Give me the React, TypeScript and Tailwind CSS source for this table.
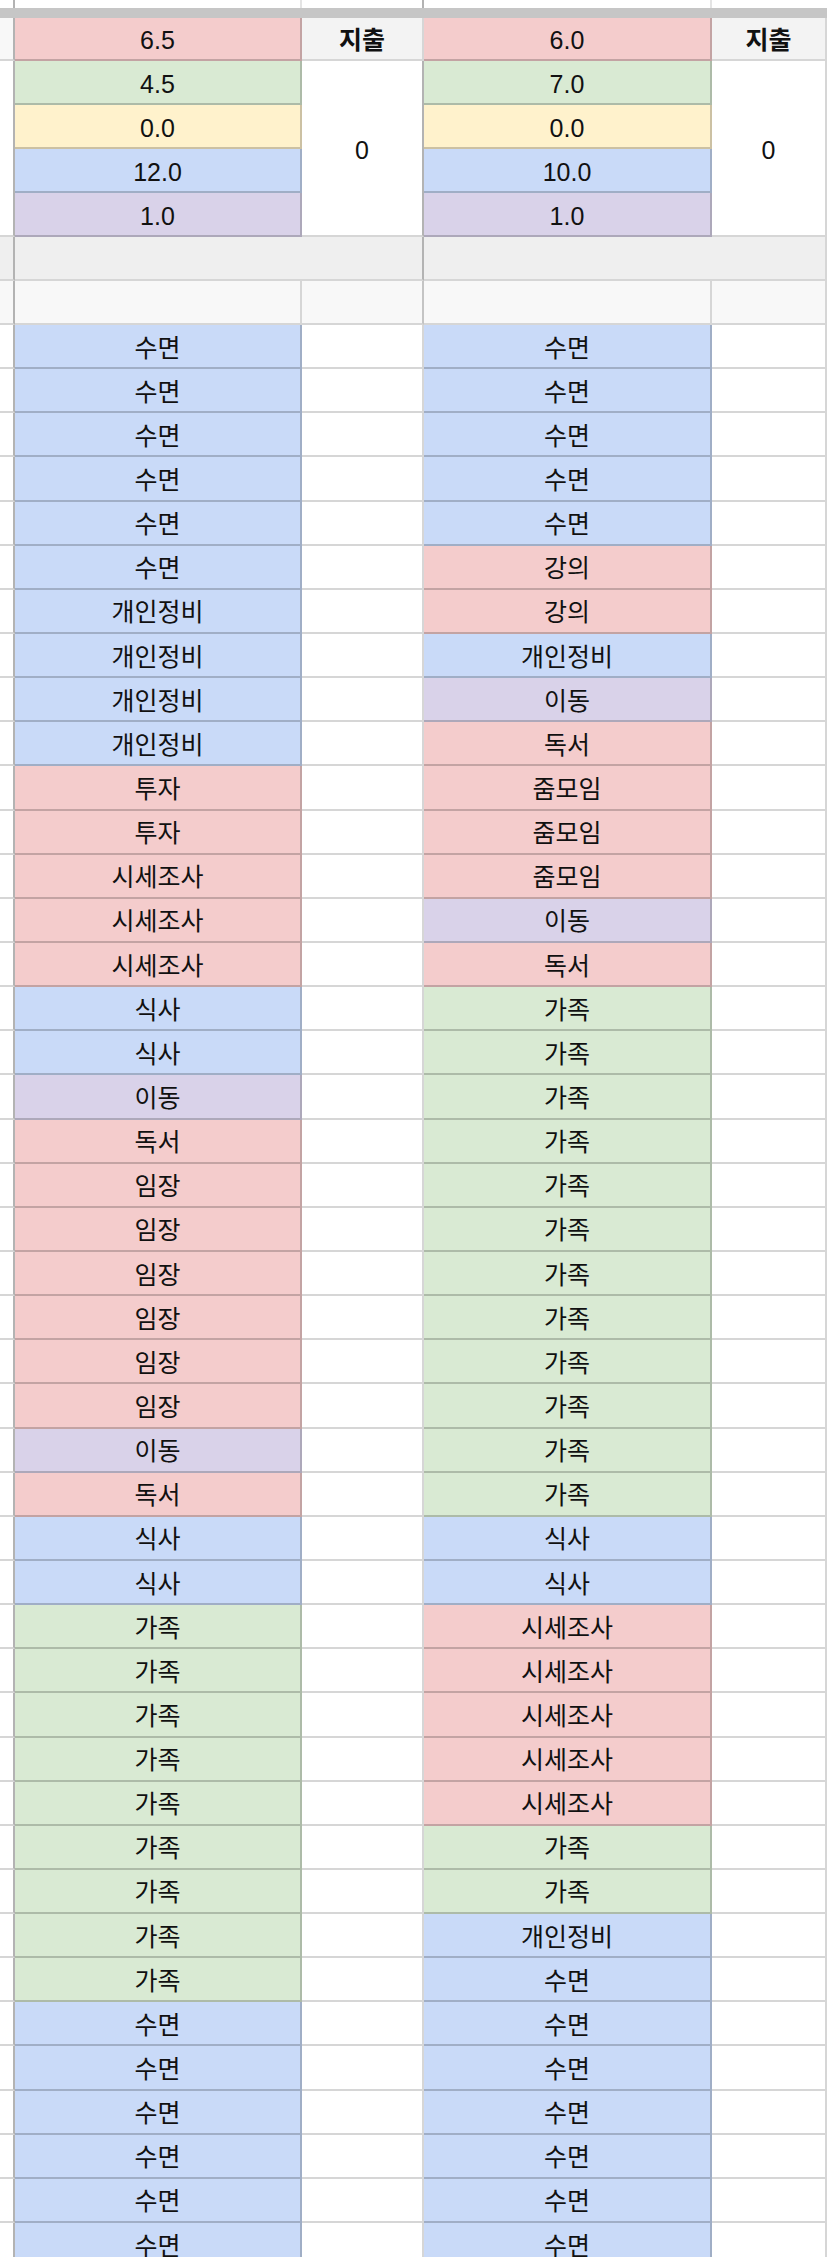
import type { ReactNode } from 'react';

const cellColors: Record<string, string> = {
  '수면': 'bg-[#c9daf8]',
  '개인정비': 'bg-[#c9daf8]',
  '식사': 'bg-[#c9daf8]',
  '투자': 'bg-[#f4cccc]',
  '시세조사': 'bg-[#f4cccc]',
  '독서': 'bg-[#f4cccc]',
  '임장': 'bg-[#f4cccc]',
  '강의': 'bg-[#f4cccc]',
  '줌모임': 'bg-[#f4cccc]',
  '이동': 'bg-[#d9d2e9]',
  '가족': 'bg-[#d9ead3]',
};

const left = [
  '수면', '수면', '수면', '수면', '수면', '수면',
  '개인정비', '개인정비', '개인정비', '개인정비',
  '투자', '투자', '시세조사', '시세조사', '시세조사',
  '식사', '식사', '이동', '독서',
  '임장', '임장', '임장', '임장', '임장', '임장',
  '이동', '독서', '식사', '식사',
  '가족', '가족', '가족', '가족', '가족', '가족', '가족', '가족', '가족',
  '수면', '수면', '수면', '수면', '수면', '수면',
];

const right = [
  '수면', '수면', '수면', '수면', '수면',
  '강의', '강의', '개인정비', '이동', '독서',
  '줌모임', '줌모임', '줌모임', '이동', '독서',
  '가족', '가족', '가족', '가족', '가족', '가족', '가족', '가족', '가족', '가족', '가족', '가족',
  '식사', '식사',
  '시세조사', '시세조사', '시세조사', '시세조사', '시세조사',
  '가족', '가족', '개인정비',
  '수면', '수면', '수면', '수면', '수면', '수면', '수면',
];

const cols = 'grid grid-cols-[15px_287px_122px_288px_115px]';

function Plain({ className = '', children }: { className?: string; children?: ReactNode }) {
  return (
    <div className={`flex items-center justify-center border-r-2 border-b-2 border-[#d6d6d6] pt-1 ${className}`}>
      {children}
    </div>
  );
}

function Colored({ bg, children }: { bg: string; children?: ReactNode }) {
  return (
    <div className={`flex items-center justify-center border-r-2 border-b-2 border-black/20 pt-1 ${bg}`}>
      {children}
    </div>
  );
}

function Gutter({ className = 'bg-white' }: { className?: string }) {
  return <div className={`border-r-2 border-b-2 border-r-[#b3b3b3] border-b-[#d6d6d6] ${className}`} />;
}

export default function App() {
  return (
    <div className="w-[827px] h-[2257px] overflow-hidden bg-white text-[25px] leading-none text-[#111] font-['Liberation_Sans','Noto_Sans_CJK_KR',sans-serif]">
      {/* frozen header edge */}
      <div className={`${cols} h-[8px]`}>
        <div className="border-r-2 border-[#b3b3b3]" />
        <div className="border-r-2 border-[#e4e4e4]" />
        <div className="border-r-2 border-[#b3b3b3]" />
        <div className="border-r-2 border-[#e4e4e4]" />
        <div />
      </div>
      <div className="h-[10px] bg-[#c6c6c6]" />

      {/* summary */}
      <div className={`${cols} grid-rows-[43px_44px_44px_44px_44px_44px_44px]`}>
        <Gutter className="bg-[#f8f8f8]" />
        <Colored bg="bg-[#f4cccc]">6.5</Colored>
        <Plain className="bg-[#f3f3f3] font-bold">지출</Plain>
        <Colored bg="bg-[#f4cccc]">6.0</Colored>
        <Plain className="bg-[#f3f3f3] font-bold">지출</Plain>

        <Gutter className="row-span-4 bg-white" />
        <Colored bg="bg-[#d9ead3]">4.5</Colored>
        <Plain className="row-span-4 bg-white border-r-[#b3b3b3]">0</Plain>
        <Colored bg="bg-[#d9ead3]">7.0</Colored>
        <Plain className="row-span-4 bg-white">0</Plain>
        <Colored bg="bg-[#fff2cc]">0.0</Colored>
        <Colored bg="bg-[#fff2cc]">0.0</Colored>
        <Colored bg="bg-[#c9daf8]">12.0</Colored>
        <Colored bg="bg-[#c9daf8]">10.0</Colored>
        <Colored bg="bg-[#d9d2e9]">1.0</Colored>
        <Colored bg="bg-[#d9d2e9]">1.0</Colored>

        <Gutter className="bg-[#efefef]" />
        <Plain className="col-span-2 bg-[#efefef] border-r-[#b3b3b3]" />
        <Plain className="col-span-2 bg-[#efefef]" />

        <Gutter className="bg-[#f8f8f8]" />
        <Plain className="bg-[#f8f8f8]" />
        <Plain className="bg-[#f8f8f8] border-r-[#c4c4c4]" />
        <Plain className="bg-[#f8f8f8]" />
        <Plain className="bg-[#f8f8f8]" />
      </div>

      {/* time blocks */}
      <div className={`${cols} auto-rows-[44.15px]`}>
        {left.map((a, i) => {
          const b = right[i];
          return [
            <Gutter key={`g${i}`} />,
            <Colored key={`a${i}`} bg={cellColors[a]}>{a}</Colored>,
            <Plain key={`b${i}`} className="bg-white" />,
            <Colored key={`c${i}`} bg={cellColors[b]}>{b}</Colored>,
            <Plain key={`d${i}`} className="bg-white" />,
          ];
        })}
      </div>
    </div>
  );
}
